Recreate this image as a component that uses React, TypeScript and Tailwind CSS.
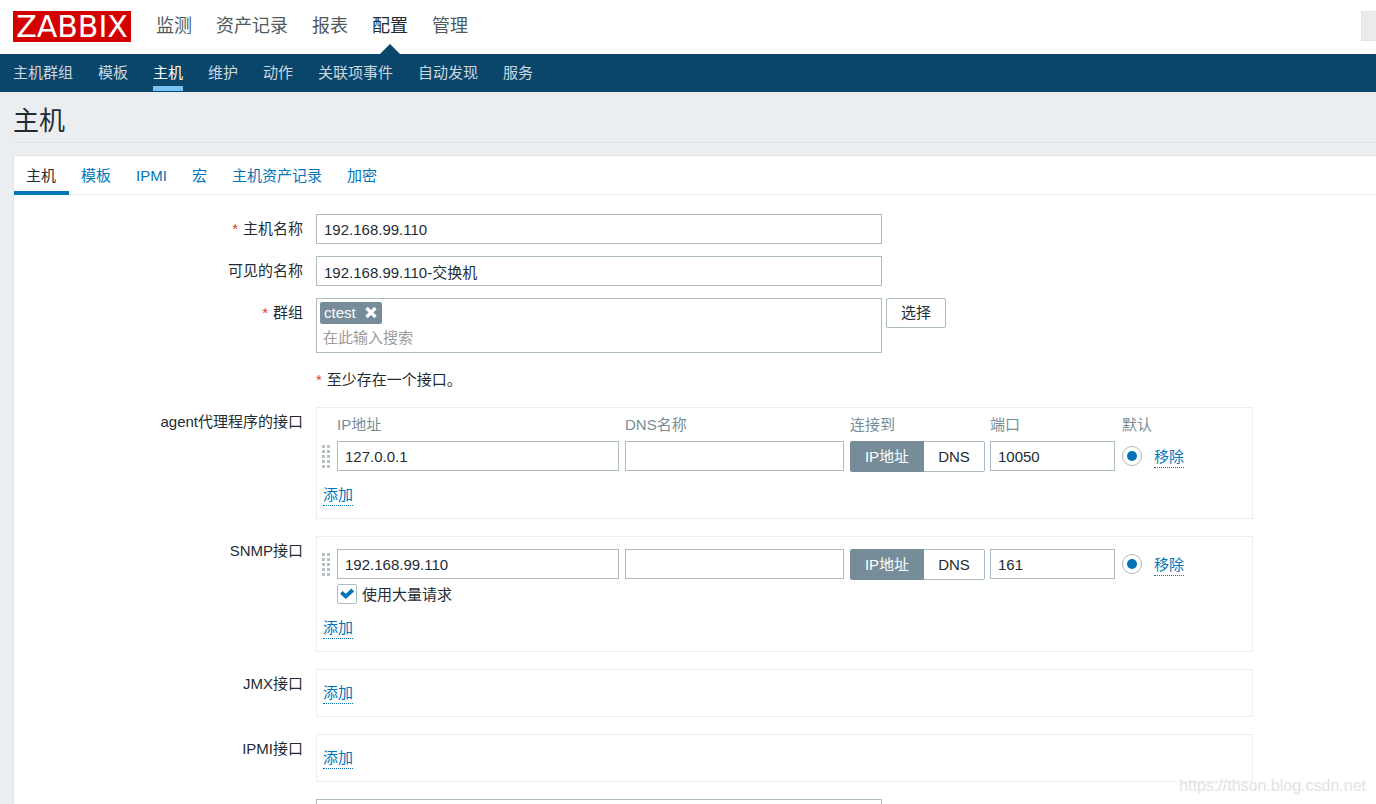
import { useState } from 'react'
import type { ReactNode } from 'react'
import clsx from 'clsx'

type HostInterface = {
  id: string
  ip: string
  dns: string
  port: string
  bulk?: boolean
}

const mainMenu = ['监测', '资产记录', '报表', '配置', '管理']
const subMenu = ['主机群组', '模板', '主机', '维护', '动作', '关联项事件', '自动发现', '服务']
const tabs = ['主机', '模板', 'IPMI', '宏', '主机资产记录', '加密']

const agentInterfaces: HostInterface[] = [{ id: 'agent', ip: '127.0.0.1', dns: '', port: '10050' }]
const snmpInterfaces: HostInterface[] = [{ id: 'snmp', ip: '192.168.99.110', dns: '', port: '161', bulk: true }]

const inputClass = 'block h-[30px] border border-[#acbbc2] bg-white px-[7px] text-[15px] text-[#1f2c33] outline-none'

function Required() {
  return <span className="mr-[5px] text-[#e33734]">*</span>
}

function FormRow({ label, htmlFor, required, children }: { label?: string; htmlFor?: string; required?: boolean; children: ReactNode }) {
  return (
    <div className="flex items-start gap-[13px]">
      <div className="w-[289px] shrink-0 text-right leading-[30px]">
        {label && (
          <label htmlFor={htmlFor}>
            {required && <Required />}
            {label}
          </label>
        )}
      </div>
      {children}
    </div>
  )
}

function DottedLink({ children }: { children: ReactNode }) {
  return (
    <a href="#" className="inline-block border-b border-dotted border-[#0275b8] align-top leading-5 text-[#0275b8]">
      {children}
    </a>
  )
}

function DragHandle() {
  return (
    <svg className="block h-6 w-[9px]" viewBox="0 0 9 24" fill="#b4c1c7">
      {[0, 5, 10, 15, 20].map((y) => (
        <g key={y}>
          <rect x="0" y={y} width="3" height="3" />
          <rect x="5" y={y} width="3" height="3" />
        </g>
      ))}
    </svg>
  )
}

function ConnectTo({ name }: { name: string }) {
  const [value, setValue] = useState('ip')

  return (
    <div className="flex h-[31px] w-[135px] leading-[29px]">
      <label
        className={clsx(
          'w-[74px] rounded-l-[2px] border text-center',
          value === 'ip' ? 'border-[#768d99] bg-[#768d99] text-white' : 'border-[#acbbc2] bg-white'
        )}
      >
        <input type="radio" name={name} className="sr-only" checked={value === 'ip'} onChange={() => setValue('ip')} />
        IP地址
      </label>
      <label
        className={clsx(
          'flex-1 rounded-r-[2px] border border-l-0 text-center',
          value === 'dns' ? 'border-[#768d99] bg-[#768d99] text-white' : 'border-[#acbbc2] bg-white'
        )}
      >
        <input type="radio" name={name} className="sr-only" checked={value === 'dns'} onChange={() => setValue('dns')} />
        DNS
      </label>
    </div>
  )
}

function InterfaceTable({ items, showHeader }: { items: HostInterface[]; showHeader?: boolean }) {
  return (
    <table className="ml-[5px] w-[880px] table-fixed border-collapse text-left">
      <colgroup>
        <col className="w-[15px]" />
        <col className="w-[288px]" />
        <col className="w-[225px]" />
        <col className="w-[140px]" />
        <col className="w-[132px]" />
        <col className="w-8" />
        <col />
      </colgroup>
      {showHeader && (
        <thead className="leading-5 text-[#768d99]">
          <tr>
            <th className="p-0" />
            {['IP地址', 'DNS名称', '连接到', '端口', '默认'].map((title) => (
              <th key={title} className="p-0 pb-1.5 font-normal">
                {title}
              </th>
            ))}
            <th className="p-0" />
          </tr>
        </thead>
      )}
      {items.map((item) => (
        <tbody key={item.id}>
          <tr className="align-top">
            <td className="p-0 pt-1">
              <DragHandle />
            </td>
            <td className="p-0">
              <input type="text" aria-label="IP地址" defaultValue={item.ip} className={clsx(inputClass, 'w-[282px]')} />
            </td>
            <td className="p-0">
              <input type="text" aria-label="DNS名称" defaultValue={item.dns} className={clsx(inputClass, 'w-[219px]')} />
            </td>
            <td className="p-0">
              <ConnectTo name={`${item.id}-useip`} />
            </td>
            <td className="p-0">
              <input type="text" aria-label="端口" defaultValue={item.port} className={clsx(inputClass, 'w-[125px]')} />
            </td>
            <td className="p-0 pt-[5px]">
              <input
                type="radio"
                name={`${item.id}-main`}
                aria-label="默认"
                defaultChecked
                className="grid size-5 appearance-none place-content-center rounded-full border border-[#acbbc2] bg-white before:size-[10px] before:rounded-full checked:before:bg-[#0275b8]"
              />
            </td>
            <td className="p-0 pt-1.5">
              <DottedLink>移除</DottedLink>
            </td>
          </tr>
          {item.bulk && (
            <tr>
              <td className="p-0" />
              <td colSpan={6} className="p-0 pt-1">
                <label className="flex items-start gap-[5px] leading-[21px]">
                  <span className="grid size-5">
                    <input
                      type="checkbox"
                      defaultChecked
                      className="peer col-start-1 row-start-1 size-5 appearance-none rounded-[2px] border border-[#acbbc2] bg-white"
                    />
                    <svg
                      className="pointer-events-none invisible col-start-1 row-start-1 size-5 peer-checked:visible"
                      viewBox="0 0 20 20"
                      fill="none"
                      stroke="#0275b8"
                      strokeWidth="3.8"
                    >
                      <path d="M4.4 8.4 L8.8 12.4 L15.8 6" />
                    </svg>
                  </span>
                  使用大量请求
                </label>
              </td>
            </tr>
          )}
        </tbody>
      ))}
    </table>
  )
}

function InterfaceBox({ className, children }: { className?: string; children?: ReactNode }) {
  return (
    <div className={clsx('w-[937px] border border-[#ebeef0] pb-3', className)}>
      {children}
      <div className={clsx('flex pl-1.5', children ? 'mt-[13px]' : '')}>
        <DottedLink>添加</DottedLink>
      </div>
    </div>
  )
}

function Header() {
  return (
    <header>
      <div className="flex h-[54px] items-start bg-white pt-[11px] pl-[13px]">
        <a href="#" className="w-[118px] bg-[#d40000] text-center font-['DejaVu_Sans',sans-serif] text-[30px] leading-[31px] text-white">
          ZABBIX
        </a>
        <nav className="ml-[25px] flex gap-6 text-[18px] leading-[30px]">
          {mainMenu.map((item) => (
            <a
              key={item}
              href="#"
              className={clsx(
                'relative h-[43px]',
                item === '配置'
                  ? 'text-[#1f2c33] after:absolute after:bottom-0 after:left-1/2 after:-translate-x-1/2 after:border-x-10 after:border-b-10 after:border-x-transparent after:border-b-[#0a466a]'
                  : 'text-[#4f5a60]'
              )}
            >
              {item}
            </a>
          ))}
        </nav>
        <input type="search" aria-label="搜索" className="ml-auto h-[30px] w-[15px] border border-r-0 border-[#dfe4e7] bg-[#ebebeb]" />
      </div>
      <nav className="flex h-[38px] gap-[25px] bg-[#0a466a] pl-[13px] leading-8">
        {subMenu.map((item) => (
          <a
            key={item}
            href="#"
            className={clsx('h-[37px] pt-[3px]', item === '主机' ? 'border-b-5 border-[#7ac3f5] text-white' : 'text-[#ccd9e1]')}
          >
            {item}
          </a>
        ))}
      </nav>
    </header>
  )
}

export default function App() {
  const [activeTab, setActiveTab] = useState(0)

  return (
    <div className="relative flex h-screen flex-col overflow-hidden bg-[#ebeef0] font-['Liberation_Sans','Noto_Sans_CJK_SC',sans-serif] text-[15px] text-[#1f2c33]">
      <Header />
      <main className="flex min-h-0 flex-1 flex-col pl-[13px]">
        <h1 className="h-[51px] shrink-0 border-b border-[#dfe4e7] pt-2 text-[26px] leading-[42px]">主机</h1>

        <form className="mt-3 flex-1 border-t border-l border-[#dfe4e7] bg-white" onSubmit={(e) => e.preventDefault()}>
          <div role="tablist" className="flex h-[39px] border-b border-[#ebeef0]">
            {tabs.map((tab, index) => (
              <button
                key={tab}
                type="button"
                role="tab"
                aria-selected={activeTab === index}
                onClick={() => setActiveTab(index)}
                className={clsx(
                  'h-[39px] border-b-4 pt-1 pr-[13px] pl-3 leading-[31px]',
                  activeTab === index ? 'border-[#0275b8] text-[#1f2c33]' : 'border-transparent text-[#0275b8]'
                )}
              >
                {tab}
              </button>
            ))}
          </div>

          <div className="flex flex-col gap-[17px] pt-[19px]">
            <div className="flex flex-col gap-3">
              <FormRow label="主机名称" htmlFor="host" required>
                <input id="host" type="text" defaultValue="192.168.99.110" className={clsx(inputClass, 'w-[566px]')} />
              </FormRow>
              <FormRow label="可见的名称" htmlFor="visible-name">
                <input id="visible-name" type="text" defaultValue="192.168.99.110-交换机" className={clsx(inputClass, 'w-[566px]')} />
              </FormRow>
              <FormRow label="群组" htmlFor="groups" required>
                <div className="flex items-start gap-1">
                  <div className="h-[55px] w-[566px] border border-[#acbbc2] bg-white p-[3px]">
                    <span className="flex h-[22px] w-[62px] items-center justify-between rounded-[2px] bg-[#768d99] px-1 text-white">
                      ctest
                      <button type="button" aria-label="删除 ctest">
                        <svg className="size-[14px]" viewBox="0 0 14 14" stroke="#fff" strokeWidth="3.4">
                          <path d="M2.5 2 L11.5 11 M11.5 2 L2.5 11" />
                        </svg>
                      </button>
                    </span>
                    <input
                      id="groups"
                      type="text"
                      placeholder="在此输入搜索"
                      className="block h-[26px] w-full px-[3px] outline-none placeholder:text-[#9b9b9b]"
                    />
                  </div>
                  <button type="button" className="h-[30px] w-[60px] rounded-[2px] border border-[#acbbc2] bg-white">
                    选择
                  </button>
                </div>
              </FormRow>
            </div>

            <FormRow>
              <p className="leading-5">
                <Required />
                至少存在一个接口。
              </p>
            </FormRow>

            <FormRow label="agent代理程序的接口">
              <InterfaceBox className="pt-[7px]">
                <InterfaceTable items={agentInterfaces} showHeader />
              </InterfaceBox>
            </FormRow>
            <FormRow label="SNMP接口">
              <InterfaceBox className="pt-3">
                <InterfaceTable items={snmpInterfaces} />
              </InterfaceBox>
            </FormRow>
            <FormRow label="JMX接口">
              <InterfaceBox className="pt-[13px]" />
            </FormRow>
            <FormRow label="IPMI接口">
              <InterfaceBox className="pt-[13px]" />
            </FormRow>
            <FormRow>
              <textarea aria-label="描述" rows={6} className="block w-[566px] border border-[#acbbc2] bg-white px-[7px] outline-none" />
            </FormRow>
          </div>
        </form>
      </main>
      <div className="pointer-events-none absolute right-[10px] bottom-2 text-[16px] leading-5 text-[#e2e2e2]">https://thson.blog.csdn.net</div>
    </div>
  )
}
